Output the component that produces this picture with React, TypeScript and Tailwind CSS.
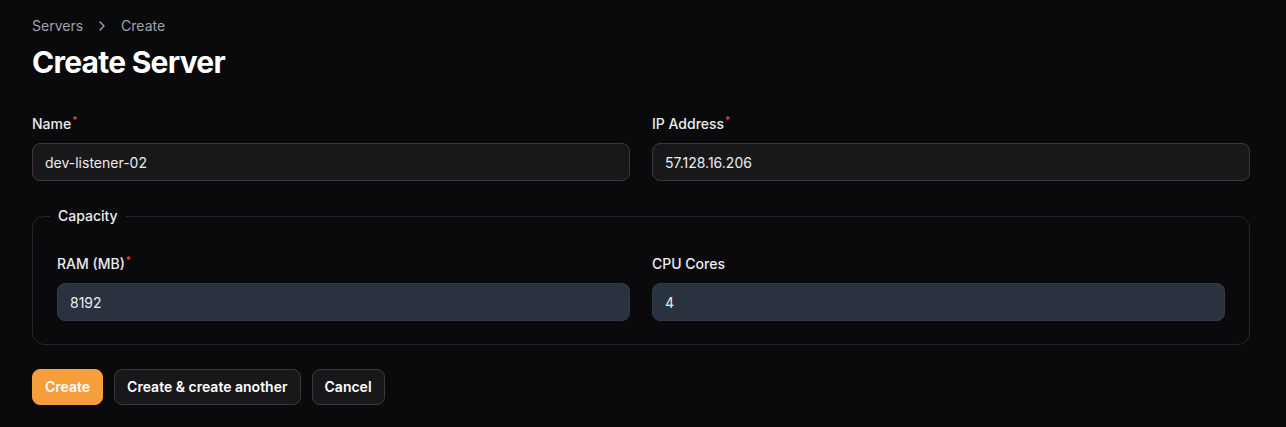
import { ChevronRight } from 'lucide-react'

function Label({ text, required }: { text: string; required?: boolean }) {
  return (
    <label className="block text-sm font-medium leading-5 text-[#ececef]">
      {text}
      {required && <sup className="ml-[1px] text-[10px] text-[#ef4444]">*</sup>}
    </label>
  )
}

function Field({ label, value, required, inner }: { label: string; value: string; required?: boolean; inner?: boolean }) {
  return (
    <div>
      <Label text={label} required={required} />
      <input
        readOnly
        value={value}
        className={
          inner
            ? 'mt-[9px] block h-[38px] w-full rounded-lg border border-[#323b49] bg-[#2a3240] px-3 text-sm text-[#ececef] outline-none'
            : 'mt-[9px] block h-[38px] w-full rounded-lg border border-[#3a3a3e] bg-[#18181a] px-3 text-sm text-[#ececef] outline-none'
        }
      />
    </div>
  )
}

export default function App() {
  return (
    <div className="min-h-screen bg-[#0a0a0c] pl-8 pr-9 pt-4 font-['Inter',sans-serif]">
      <nav className="flex items-center text-sm leading-5 text-[#a1a1aa]">
        <span>Servers</span>
        <ChevronRight className="mx-[11px] h-4 w-4" strokeWidth={2} />
        <span>Create</span>
      </nav>
      <h1 className="mt-2 text-3xl font-bold leading-9 tracking-tight text-white">Create Server</h1>

      <div className="mt-[34px] grid grid-cols-2 gap-[22px]">
        <Field label="Name" value="dev-listener-02" required />
        <Field label="IP Address" value="57.128.16.206" required />
      </div>

      <fieldset className="mt-[25px] rounded-xl border border-[#26262a] px-6 pb-[23px] pt-[28px]">
        <legend className="ml-[-7px] px-2 text-sm font-medium leading-5 text-[#ececef]">Capacity</legend>
        <div className="grid grid-cols-2 gap-[22px]">
          <Field label="RAM (MB)" value="8192" required inner />
          <Field label="CPU Cores" value="4" inner />
        </div>
      </fieldset>

      <div className="mt-6 flex gap-[11px]">
        <button className="h-9 rounded-lg border border-[#f59e3b] bg-[#f59e3b] px-3 text-sm font-semibold text-white">
          Create
        </button>
        <button className="h-9 rounded-lg border border-[#3a3a3e] bg-[#18181a] px-3 text-sm font-semibold text-white">
          Create &amp; create another
        </button>
        <button className="h-9 rounded-lg border border-[#3a3a3e] bg-[#18181a] px-3 text-sm font-semibold text-white">
          Cancel
        </button>
      </div>
    </div>
  )
}
